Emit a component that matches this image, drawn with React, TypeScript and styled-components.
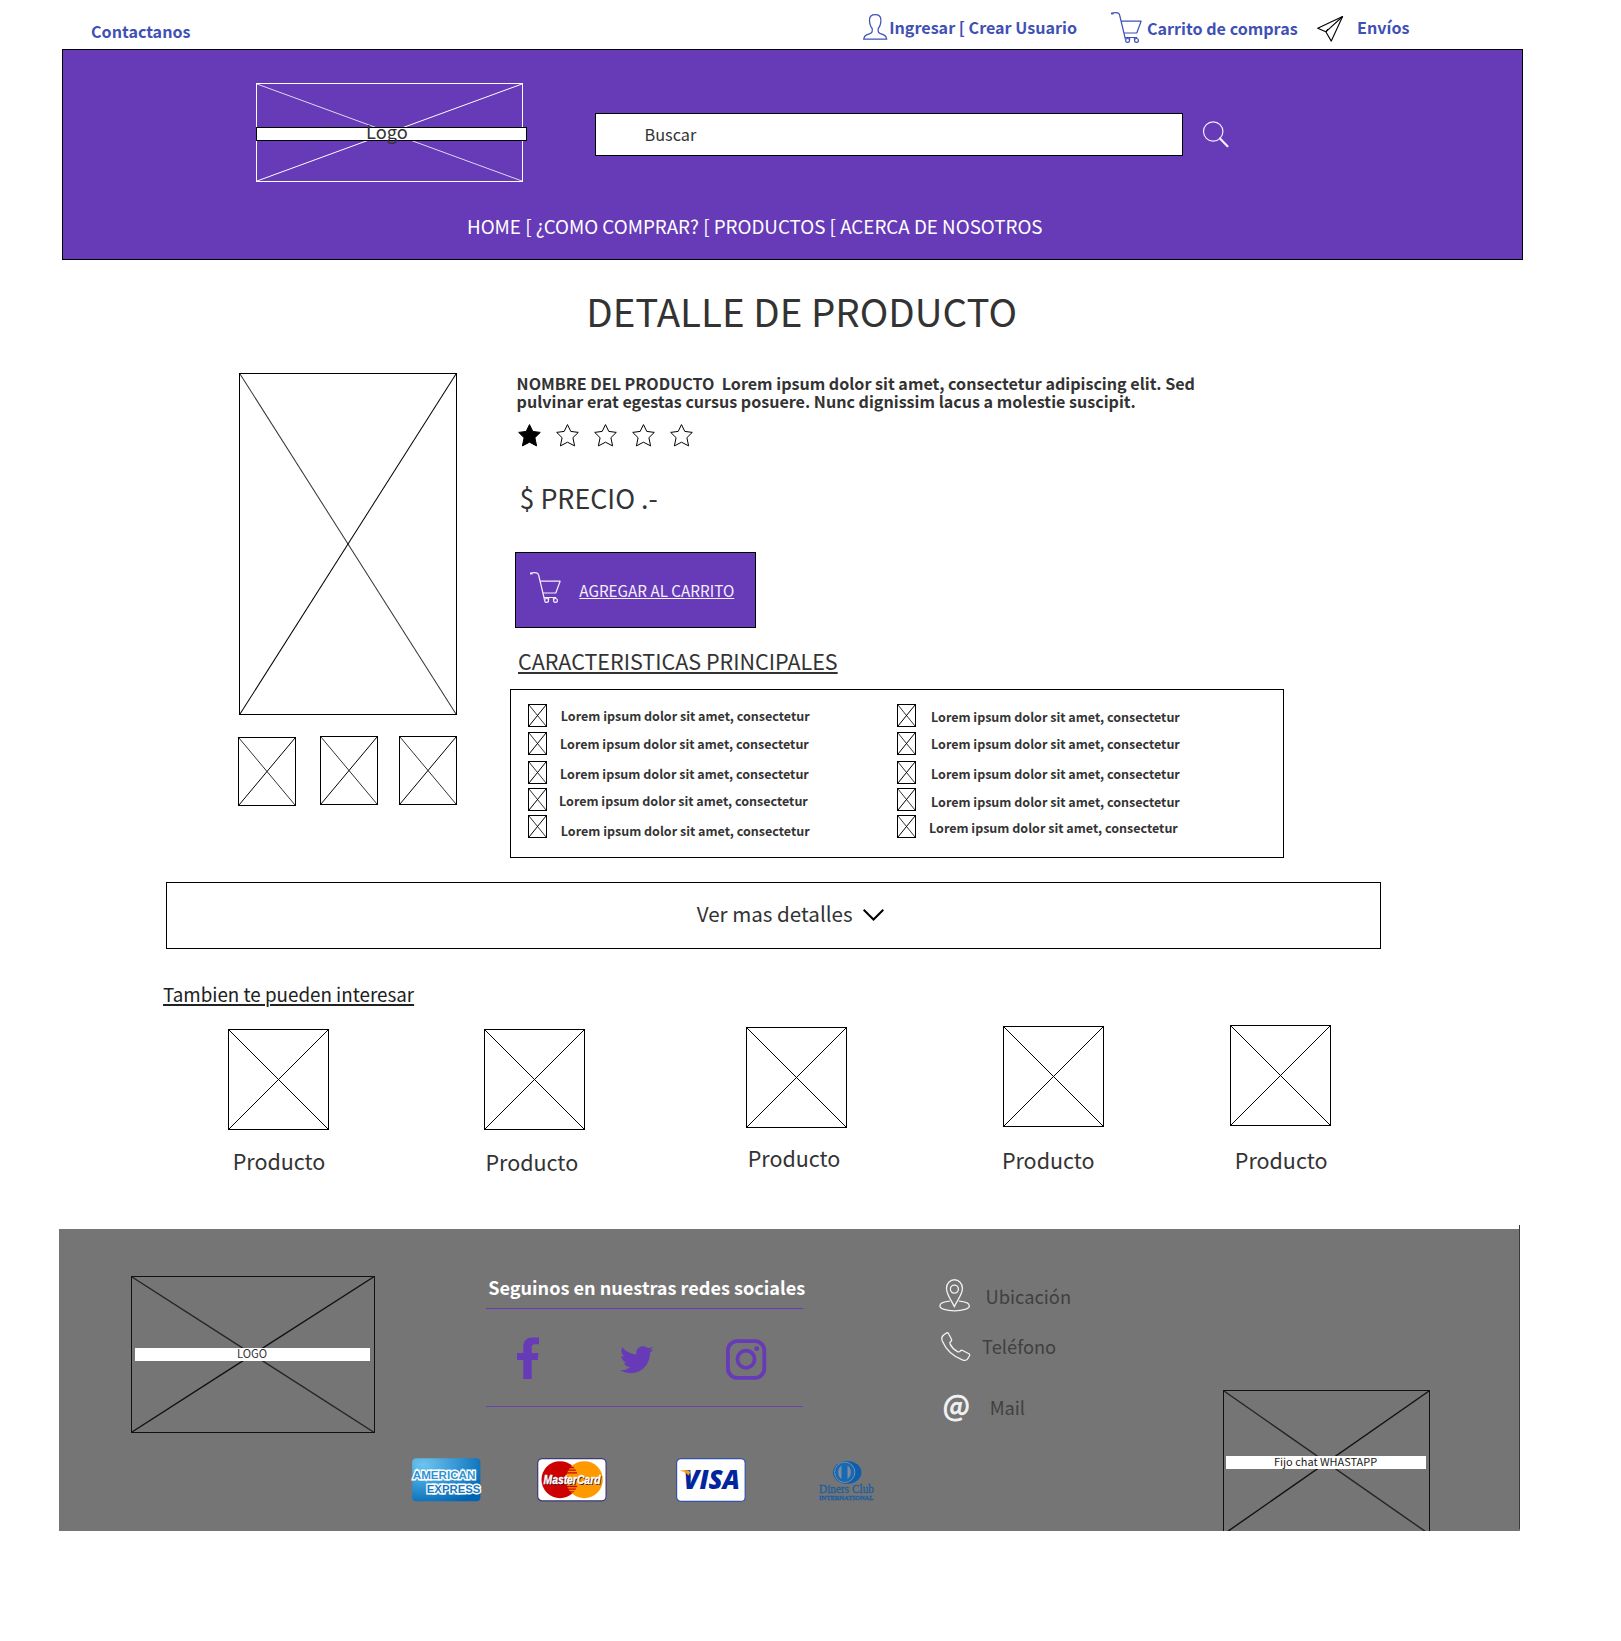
import React from "react";
import styled, { createGlobalStyle, css } from "styled-components";
import { FaTwitter } from "react-icons/fa";

const PURPLE = "#673ab7";
const BLUE = "#3f51b5";
const INK = "#333333";

const GlobalStyle = createGlobalStyle`
  *, *::before, *::after { box-sizing: border-box; }
  body {
    margin: 0;
    background: #fff;
    font-family: "Noto Sans CJK SC", "Noto Sans", sans-serif;
    color: ${INK};
  }
  h1, h2, p, ul { margin: 0; padding: 0; font-weight: 400; list-style: none; }
  svg { display: block; overflow: visible; }
`;

const type = (size: number, line: number, weight = 400) => css`
  font-size: ${size}px;
  line-height: ${line}px;
  font-weight: ${weight};
  white-space: nowrap;
`;

const Page = styled.div`
  width: 1621px;
  height: 1641px;
  overflow: hidden;
  display: flex;
  flex-direction: column;
  background: #fff;
`;

/* ---------- crossed placeholder frame ---------- */

const Frame = styled.div<{ $w: number; $h: number; $color?: string; $mt?: number; $ml?: number }>`
  position: relative;
  flex: none;
  width: ${(p) => p.$w}px;
  height: ${(p) => p.$h}px;
  margin: ${(p) => p.$mt ?? 0}px 0 0 ${(p) => p.$ml ?? 0}px;
  border: 1px solid ${(p) => p.$color ?? "#000"};
  color: ${(p) => p.$color ?? "#000"};
`;

const Diagonals = styled.svg`
  width: 100%;
  height: 100%;
  stroke: currentColor;
  fill: none;
  line { vector-effect: non-scaling-stroke; }
`;

function Cross({ crisp = false, stroke = 1 }: { crisp?: boolean; stroke?: number }) {
  return (
    <Diagonals viewBox="0 0 100 100" preserveAspectRatio="none" strokeWidth={stroke}
      shapeRendering={crisp ? "crispEdges" : undefined}>
      <line x1="0" y1="0" x2="100" y2="100" opacity={crisp ? 1 : 0.8} />
      <line x1="0" y1="100" x2="100" y2="0" />
    </Diagonals>
  );
}

/* ---------- top bar ---------- */

const TopBar = styled.nav`
  height: 49px;
  flex: none;
  display: grid;
  grid-template-columns: 772px 26.200px 221.800px 36px 170px 40px auto;
  align-items: start;
  padding-left: 91px;
  color: ${BLUE};
`;

const TopLink = styled.span<{ $top: number }>`
  ${type(16.13, 24, 700)}
  margin-top: ${(p) => p.$top}px;
`;

const TopIcon = styled.span<{ $top: number; $color?: string }>`
  margin-top: ${(p) => p.$top}px;
  color: ${(p) => p.$color ?? BLUE};
`;

const UserIcon = () => (
  <svg width="25" height="26" viewBox="0 0 25 26" fill="none" stroke="currentColor" strokeWidth="1.2">
    <path d="M12.2.7C8.5.7 6.5 2.6 6.5 6c0 1.700.1 3 .6 4.500.4 1.600 1.200 2.900 2.100 4 .2 1.500.1 2.800-.4 3.900-.7 1.200-3.300 1.600-5.300 2.500C1.700 21.700.9 23 .7 25.100h23C23.500 23 22.700 21.700 20.900 20.900c-2-.9-4.600-1.300-5.300-2.500-.5-1.100-.6-2.400-.4-3.900.9-1.100 1.700-2.400 2.100-4 .5-1.500.6-2.800.6-4.500C17.900 2.600 15.900.7 12.200.7Z" />
  </svg>
);

const CartIcon = () => (
  <svg width="31" height="31" viewBox="0 0 31 31" fill="none" stroke="currentColor" strokeWidth="1.2" strokeLinejoin="round">
    <path d="M.6 2.300V1.100C2.500.6 4.800.5 6.500.8 7.800 1 8.300 1.900 8.600 3L14 25.500h12.200" />
    <path d="M.6 1.800h2" />
    <path d="M10.100 9.200h20L25.800 21H13" />
    <circle cx="16.600" cy="28.400" r="1.900" />
    <circle cx="25.500" cy="28.400" r="1.900" />
    <path d="M14.200 25.500v2M18.600 28v-2.500M23.500 28v-2.500" />
  </svg>
);

const PlaneIcon = () => (
  <svg width="27" height="26" viewBox="0 0 27 26" fill="none" stroke="currentColor" strokeWidth="1.1" strokeLinejoin="round">
    <path d="M25.600.5.7 12.300 8.800 15.800 14.300 25.100Z" />
    <path d="M8.800 15.800 25.600.5" />
    <path d="M8.800 15.800 11 13.200" />
  </svg>
);

/* ---------- header ---------- */

const Header = styled.header`
  flex: none;
  width: 1461px;
  height: 211px;
  margin-left: 62px;
  padding-top: 33px;
  border: 1px solid #000;
  background: ${PURPLE};
`;

const HeaderRow = styled.div`
  display: grid;
  grid-template-columns: 339px 608px auto;
  align-items: start;
  padding-left: 193px;
`;

const LogoBand = styled.div`
  position: absolute;
  top: 43px;
  left: -1px;
  width: 271px;
  height: 14px;
  display: flex;
  align-items: flex-start;
  border: 1px solid #000;
  background: #fff;
`;

const LogoText = styled.span`
  ${type(18.28, 26)}
  margin: -10px 0 0 109px;
  color: ${INK};
`;

const SearchBox = styled.div`
  ${type(16.3, 24)}
  width: 588px;
  height: 43px;
  margin-top: 30px;
  padding: 8px 0 0 48.500px;
  border: 1px solid #000;
  background: #fff;
`;

const SearchButton = styled.div`
  margin-top: 38px;
  color: #f3eefa;
`;

const Menu = styled.div`
  ${type(18.8, 25)}
  margin: 31px 0 0 404px;
  color: #fff;
`;

/* ---------- product ---------- */

const Title = styled.h1`
  ${type(38.5, 56)}
  margin: 22px 0 0 586.200px;
`;

const Product = styled.section`
  flex: none;
  height: 485px;
  margin-top: 35px;
  padding-left: 238px;
  display: grid;
  grid-template-columns: 272px 774px;
`;

const Gallery = styled.div`
  display: flex;
  flex-direction: column;
`;

const Thumbs = styled.div`
  display: grid;
  grid-template-columns: 82px 79px 58px;
  align-items: start;
  margin-top: 21px;
`;

const Details = styled.div`
  display: flex;
  flex-direction: column;
  align-items: flex-start;
  padding-top: 1px;
`;

const Name = styled.p`
  ${type(16.1, 18, 700)}
  margin-left: 6.600px;
`;

const Stars = styled.div`
  display: flex;
  gap: 15px;
  height: 24px;
  margin: 13px 0 0 8px;
`;

const Price = styled.p`
  ${type(26.82, 39)}
  margin: 31px 0 0 9.500px;
`;

const AddButton = styled.div`
  width: 241px;
  height: 76px;
  flex: none;
  display: grid;
  grid-template-columns: 49.300px auto;
  align-items: start;
  margin: 35px 0 0 5px;
  padding: 19px 0 0 14px;
  border: 1px solid #000;
  background: ${PURPLE};
  color: #f4f0fa;
`;

const AddLabel = styled.span`
  ${type(15.25, 22)}
  margin-top: 7px;
  text-decoration: underline;
  text-decoration-thickness: 1px;
  text-underline-offset: 1px;
  text-decoration-skip-ink: none;
`;

const Subtitle = styled.h2`
  ${type(21.5, 31)}
  margin: 17px 0 0 8px;
  text-decoration: underline;
  text-decoration-thickness: 2px;
  text-underline-offset: 2px;
  text-decoration-skip-ink: none;
`;

const FeatureBox = styled.div`
  flex: none;
  width: 774px;
  height: 169px;
  display: grid;
  grid-template-columns: 369px auto;
  margin-top: 13px;
  padding: 14px 0 0 17px;
  border: 1px solid #000;
`;

const FeatureItem = styled.li<{ $h: number }>`
  display: flex;
  align-items: flex-start;
  height: ${(p) => p.$h}px;
`;

const FeatureText = styled.span<{ $dx: number; $dy: number }>`
  ${type(12.53, 19, 700)}
  margin: ${(p) => p.$dy}px 0 0 ${(p) => p.$dx}px;
`;

const rowHeights = [28, 29, 27, 27, 23];
const features: { dx: number; dy: number }[][] = [
  [{ dx: 13.8, dy: 2 }, { dx: 13, dy: 2 }, { dx: 13, dy: 3 }, { dx: 12, dy: 3 }, { dx: 13.8, dy: 6 }],
  [{ dx: 15, dy: 3 }, { dx: 15, dy: 2 }, { dx: 15, dy: 3 }, { dx: 15, dy: 4 }, { dx: 13, dy: 3 }],
];

const StarIcon = ({ filled }: { filled?: boolean }) => (
  <svg width="23.100" height="24" viewBox="0 0 23.1 24" stroke="#000" strokeWidth="1" fill={filled ? "#000" : "none"}>
    <path d="M11.500 1.600 14.800 8.400 22.300 9.400 16.900 14.700 18.600 22.900 11.500 19.200 4.400 22.900 6.100 14.700.7 9.400 8.200 8.400Z" />
  </svg>
);

/* ---------- more details ---------- */

const MoreBar = styled.div`
  flex: none;
  width: 1215px;
  height: 67px;
  display: flex;
  align-items: flex-start;
  margin: 24px 0 0 166px;
  padding: 15px 0 0 529.700px;
  border: 1px solid #000;
`;

const MoreLabel = styled.span`
  ${type(20.6, 30)}
  width: 166.500px;
`;

const Chevron = styled.svg`
  margin-top: 11px;
`;

const Related = styled.h2`
  ${type(18.8, 25)}
  align-self: flex-start;
  margin: 32px 0 0 163px;
  color: #212121;
  text-decoration: underline;
  text-decoration-thickness: 2px;
  text-underline-offset: 2px;
`;

const Products = styled.section`
  flex: none;
  height: 204px;
  margin-top: 19px;
  padding-left: 228px;
  display: grid;
  grid-template-columns: 256px 262px 257px 227px 101px;
  align-items: start;
`;

const ProductCard = styled.div<{ $top: number }>`
  display: flex;
  flex-direction: column;
  align-items: flex-start;
  padding-top: ${(p) => p.$top}px;
`;

const ProductLabel = styled.span<{ $gap: number; $dx: number }>`
  ${type(21.5, 31)}
  margin: ${(p) => p.$gap}px 0 0 ${(p) => p.$dx}px;
`;

const products = [
  { top: 4, gap: 15, dx: 4.7 },
  { top: 4, gap: 16, dx: 1.5 },
  { top: 2, gap: 14, dx: 1.7 },
  { top: 1, gap: 17, dx: -1.1 },
  { top: 0, gap: 18, dx: 4.8 },
];

/* ---------- footer ---------- */

const Footer = styled.footer`
  position: relative;
  flex: none;
  width: 1461px;
  height: 302px;
  margin-left: 59px;
  background: #757575;

  &::after {
    content: "";
    position: absolute;
    top: -4px;
    right: 0;
    width: 1px;
    height: 304px;
    background: #3a3a3a;
  }
`;

const FooterRow = styled.div`
  display: grid;
  grid-template-columns: 355px 453px auto;
  align-items: start;
  height: 229px;
  padding-left: 72px;
`;

const Band = styled.div<{ $top: number; $left: number; $w: number; $h: number }>`
  position: absolute;
  top: ${(p) => p.$top}px;
  left: ${(p) => p.$left}px;
  width: ${(p) => p.$w}px;
  height: ${(p) => p.$h}px;
  display: flex;
  align-items: flex-start;
  background: #fff;
`;

const BandText = styled.span<{ $left: number; $size: number; $color: string; $top: number }>`
  ${(p) => type(p.$size, 16)}
  margin: ${(p) => p.$top}px 0 0 ${(p) => p.$left}px;
  color: ${(p) => p.$color};
`;

const Social = styled.div`
  display: flex;
  flex-direction: column;
  width: 316.500px;
  margin-top: 45px;
`;

const SocialTitle = styled.p`
  ${type(18.1, 26, 700)}
  margin: 0 0 8px 2.200px;
  color: #fff;
`;

const SocialIcons = styled.div`
  height: 99px;
  display: grid;
  grid-template-columns: 103px 106px 40px;
  align-items: start;
  padding-left: 31px;
  border-top: 1px solid ${PURPLE};
  border-bottom: 1px solid #6a45a8;
  color: ${PURPLE};
`;

const IconSlot = styled.span<{ $top?: number; $dx?: number }>`
  margin: ${(p) => p.$top ?? 0}px 0 0 ${(p) => p.$dx ?? 0}px;
`;

const Contacts = styled.div`
  display: flex;
  flex-direction: column;
  margin-top: 50px;
`;

const Contact = styled.div<{ $h: number }>`
  height: ${(p) => p.$h}px;
  display: grid;
  grid-template-columns: 42px auto;
  align-items: start;
  color: #f2f2f2;
`;

const ContactText = styled.span<{ $top: number; $dx: number }>`
  ${type(18.3, 26)}
  margin: ${(p) => p.$top}px 0 0 ${(p) => p.$dx}px;
  color: #404040;
`;

const At = styled.span`
  ${type(28.6, 41)}
  margin: -9px 0 0 3.800px;
  -webkit-text-stroke: 0.9px #f2f2f2;
`;

const Payments = styled.div`
  display: grid;
  grid-template-columns: 124.500px 139px 143.500px auto;
  align-items: start;
  padding-left: 353px;
`;

const ChatClip = styled.div`
  position: absolute;
  left: 1164px;
  top: 161px;
  width: 208px;
  height: 141px;
  overflow: hidden;
`;

const Facebook = () => (
  <svg width="22" height="42" viewBox="0 0 22 42" fill="currentColor">
    <path d="M22 .5H15.800C9.700.5 6.300 3.800 6.300 9.700V16H0v7h6.300v19h8.400V23h6.100l.7-7h-6.800v-5.500c0-2.400.8-3.200 2.800-3.200H22Z" />
  </svg>
);

const Instagram = () => (
  <svg width="40" height="41" viewBox="0 0 40 41" fill="none" stroke="currentColor">
    <rect x="1.900" y="2.100" width="36.400" height="36.800" rx="9.500" strokeWidth="3.800" />
    <circle cx="20" cy="20.200" r="8.600" strokeWidth="3.800" />
    <circle cx="30.700" cy="9.700" r="2.400" fill="currentColor" stroke="none" />
  </svg>
);

const PinIcon = () => (
  <svg width="31" height="33" viewBox="0 0 31 33" fill="none" stroke="currentColor" strokeWidth="1.300">
    <path d="M15.300 27.600C12 20.500 7.500 15.500 7.500 9.200A7.900 8.400 0 0 1 23.400 9.200C23.400 15.500 18.700 20.500 15.300 27.600Z" />
    <circle cx="15.400" cy="10.100" r="4" />
    <path d="M10.800 22.200C5 22.700.9 24.500.9 26.900.9 29.800 7.200 31.800 15.500 31.800S30.300 29.800 30.300 26.900C30.300 24.500 26 22.700 20 22.200" />
  </svg>
);

const PhoneIcon = () => (
  <svg width="30" height="30" viewBox="0 0 30 30" fill="none" stroke="currentColor" strokeWidth="1.300" strokeLinejoin="round">
    <path d="M2.600 3.100 5 1.200C6 .5 6.900.6 7.400 1.500L10.500 7.200c.5 1 .1 1.800-.8 2.400-1 .7-1.100 1.500-.6 2.500 1.500 3 4.300 5.900 7.400 7.500 1.100.6 2 .4 2.700-.5.6-.8 1.500-1.100 2.500-.6l6.200 3.300c.9.5 1.100 1.300.5 2.200l-1.800 2.900c-1 1.500-2.800 1.900-5.300.9C11.900 24.200 4.600 16.800 1.300 9 .3 6.400.7 4.400 2.600 3.100Z" />
  </svg>
);

const Amex = () => (
  <svg width="69" height="44" viewBox="0 0 69 44">
    <defs>
      <radialGradient id="amexBg" cx="0.160" cy="0.150" r="1">
        <stop offset="0" stopColor="#6ec4ee" />
        <stop offset="0.450" stopColor="#3b9bd8" />
        <stop offset="1" stopColor="#0066b3" />
      </radialGradient>
    </defs>
    <rect x="0.200" y="0.200" width="68.200" height="43" rx="4" fill="url(#amexBg)" />
    <g fontFamily="'Liberation Sans', Arial, sans-serif" fontWeight="700" fontSize="11.800" fill="#2f93d3"
      stroke="#fff" strokeWidth="2.800" paintOrder="stroke" strokeLinejoin="miter">
      <text x="0.800" y="20.600" textLength="62.500" lengthAdjust="spacingAndGlyphs">AMERICAN</text>
      <text x="14.800" y="34.600" textLength="53.500" lengthAdjust="spacingAndGlyphs" fill="#1779c0">EXPRESS</text>
    </g>
  </svg>
);

const MasterCard = () => (
  <svg width="70" height="44" viewBox="0 0 70 44">
    <defs>
      <clipPath id="mcLeft"><circle cx="23" cy="21.700" r="18.500" /></clipPath>
    </defs>
    <rect x="0.700" y="0.600" width="68.400" height="42.200" rx="4.500" fill="#fff" stroke="#3d3a78" strokeWidth="1.200" />
    <circle cx="23" cy="21.700" r="18.500" fill="#cc0000" />
    <circle cx="47.300" cy="21.700" r="18.500" fill="#ff9900" />
    <g clipPath="url(#mcLeft)" stroke="#cc0000" strokeWidth="1.300">
      <path d="M32 9.500h7M31 12.200h8.500M30 14.900h10M29.500 28.500h11M30.500 31.200h9M32 33.900h7" />
    </g>
    <g fontFamily="'Liberation Sans', Arial, sans-serif" fontWeight="700" fontStyle="italic" fontSize="13.300">
      <text x="7.300" y="27.200" textLength="57" lengthAdjust="spacingAndGlyphs" fill="#3a1030">MasterCard</text>
      <text x="6.500" y="26.400" textLength="57" lengthAdjust="spacingAndGlyphs" fill="#fff" stroke="#fff" strokeWidth="0.300">MasterCard</text>
    </g>
  </svg>
);

const Visa = () => (
  <svg width="70" height="44" viewBox="0 0 70 44">
    <defs>
      <linearGradient id="visaInk" gradientUnits="userSpaceOnUse" x1="8" y1="14" x2="15" y2="18">
        <stop offset="0.650" stopColor="#f7a01b" />
        <stop offset="0.750" stopColor="#0a2a9c" />
      </linearGradient>
    </defs>
    <rect x="0.600" y="0.600" width="68.600" height="42.800" rx="4.500" fill="#fff" stroke="#3452a8" strokeWidth="1.200" />
    <text x="7.500" y="31" textLength="56.500" lengthAdjust="spacingAndGlyphs" fontFamily="'Open Sans', sans-serif"
      fontWeight="800" fontStyle="italic" fontSize="26" fill="#00259c">VISA</text>
    <path d="M4.500 12.300H11.500C13 12.300 13.800 13 14 14.500L14.800 20.500C12.500 16.500 9 13.800 4.500 12.700Z" fill="url(#visaInk)" />
  </svg>
);

const Diners = () => (
  <svg width="56" height="40" viewBox="0 0 56 40">
    <ellipse cx="28.200" cy="14.400" rx="14.200" ry="11.400" fill="#0b5fae" />
    <circle cx="25.700" cy="14.300" r="10.200" fill="#1769b3" stroke="#7b8fa5" strokeWidth="1" />
    <path d="M22.500 7.500C18 10.500 18 18 22.500 21ZM28.500 7.500C33 10.500 33 18 28.500 21Z" fill="#7d8c9c" />
    <g fontFamily="'Liberation Serif', serif" fill="#1f5e9c" stroke="#1f5e9c" strokeWidth="0.300">
      <text x="0" y="35" fontSize="11.500" textLength="55" lengthAdjust="spacingAndGlyphs">Diners Club</text>
      <text x="0" y="42" fontSize="6.600" fontWeight="700" textLength="54.500" lengthAdjust="spacingAndGlyphs">INTERNATIONAL</text>
    </g>
  </svg>
);

export default function App() {
  return (
    <Page>
      <GlobalStyle />
      <TopBar>
        <TopLink $top={19}>Contactanos</TopLink>
        <TopIcon $top={14}><UserIcon /></TopIcon>
        <TopLink $top={15}>Ingresar [ Crear Usuario</TopLink>
        <TopIcon $top={12}><CartIcon /></TopIcon>
        <TopLink $top={16}>Carrito de compras</TopLink>
        <TopIcon $top={16} $color="#000"><PlaneIcon /></TopIcon>
        <TopLink $top={15}>Envíos</TopLink>
      </TopBar>

      <Header>
        <HeaderRow>
          <Frame $w={267} $h={99} $color="#fff">
            <Cross />
            <LogoBand><LogoText>Logo</LogoText></LogoBand>
          </Frame>
          <SearchBox>Buscar</SearchBox>
          <SearchButton>
            <svg width="26" height="27" viewBox="0 0 26 27" fill="none" stroke="currentColor">
              <circle cx="10.200" cy="10.500" r="9.700" strokeWidth="1.200" />
              <path d="M17 17.500 24.500 25.200" strokeWidth="2.200" strokeLinecap="round" />
            </svg>
          </SearchButton>
        </HeaderRow>
        <Menu>HOME [ ¿COMO COMPRAR? [ PRODUCTOS [ ACERCA DE NOSOTROS</Menu>
      </Header>

      <Title>DETALLE DE PRODUCTO</Title>

      <Product>
        <Gallery>
          <Frame $w={218} $h={342} $ml={1}><Cross /></Frame>
          <Thumbs>
            <Frame $w={58} $h={69} $mt={1}><Cross /></Frame>
            <Frame $w={58} $h={69}><Cross /></Frame>
            <Frame $w={58} $h={69}><Cross /></Frame>
          </Thumbs>
        </Gallery>
        <Details>
          <Name>
            NOMBRE DEL PRODUCTO&nbsp; Lorem ipsum dolor sit amet, consectetur adipiscing elit. Sed
            <br />
            pulvinar erat egestas cursus posuere. Nunc dignissim lacus a molestie suscipit.
          </Name>
          <Stars>
            {[0, 1, 2, 3, 4].map((i) => <StarIcon key={i} filled={i === 0} />)}
          </Stars>
          <Price>$ PRECIO .-</Price>
          <AddButton>
            <CartIcon />
            <AddLabel>AGREGAR AL CARRITO</AddLabel>
          </AddButton>
          <Subtitle>CARACTERISTICAS PRINCIPALES</Subtitle>
          <FeatureBox>
            {features.map((column, c) => (
              <ul key={c}>
                {column.map((f, r) => (
                  <FeatureItem key={r} $h={rowHeights[r]}>
                    <Frame $w={19} $h={23}><Cross /></Frame>
                    <FeatureText $dx={f.dx} $dy={f.dy}>Lorem ipsum dolor sit amet, consectetur</FeatureText>
                  </FeatureItem>
                ))}
              </ul>
            ))}
          </FeatureBox>
        </Details>
      </Product>

      <MoreBar>
        <MoreLabel>Ver mas detalles</MoreLabel>
        <Chevron width="21" height="12" viewBox="0 0 21 12" fill="none" stroke="#000" strokeWidth="2">
          <path d="M.7.8 10.500 10.500 20.300.8" />
        </Chevron>
      </MoreBar>

      <Related>Tambien te pueden interesar</Related>
      <Products>
        {products.map((p, i) => (
          <ProductCard key={i} $top={p.top}>
            <Frame $w={101} $h={101}><Cross crisp /></Frame>
            <ProductLabel $gap={p.gap} $dx={p.dx}>Producto</ProductLabel>
          </ProductCard>
        ))}
      </Products>

      <Footer>
        <FooterRow>
          <Frame $w={243.5} $h={157} $mt={47} $color="#111">
            <Cross stroke={1.4} />
            <Band $top={71} $left={2.5} $w={235.5} $h={12.5}>
              <BandText $top={-3} $left={102.4} $size={11.24} $color={INK}>LOGO</BandText>
            </Band>
          </Frame>
          <Social>
            <SocialTitle>Seguinos en nuestras redes sociales</SocialTitle>
            <SocialIcons>
              <IconSlot $top={28}><Facebook /></IconSlot>
              <IconSlot $top={34}><FaTwitter size={33.3} /></IconSlot>
              <IconSlot $top={30}><Instagram /></IconSlot>
            </SocialIcons>
          </Social>
          <Contacts>
            <Contact $h={53}>
              <IconSlot $dx={0.4}><PinIcon /></IconSlot>
              <ContactText $top={4} $dx={4.6}>Ubicación</ContactText>
            </Contact>
            <Contact $h={60}>
              <IconSlot $dx={1.8}><PhoneIcon /></IconSlot>
              <ContactText $top={1} $dx={1.1}>Teléfono</ContactText>
            </Contact>
            <Contact $h={40}>
              <At>@</At>
              <ContactText $top={2} $dx={8.7}>Mail</ContactText>
            </Contact>
          </Contacts>
        </FooterRow>
        <Payments>
          <IconSlot><Amex /></IconSlot>
          <IconSlot><MasterCard /></IconSlot>
          <IconSlot><Visa /></IconSlot>
          <IconSlot><Diners /></IconSlot>
        </Payments>
        <ChatClip>
          <Frame $w={207} $h={145} $color="#111">
            <Cross stroke={1.4} />
            <Band $top={65} $left={2} $w={199.5} $h={12.5}>
              <BandText $top={-3} $left={48} $size={10.96} $color="#1c1c1c">Fijo chat WHASTAPP</BandText>
            </Band>
          </Frame>
        </ChatClip>
      </Footer>
    </Page>
  );
}
